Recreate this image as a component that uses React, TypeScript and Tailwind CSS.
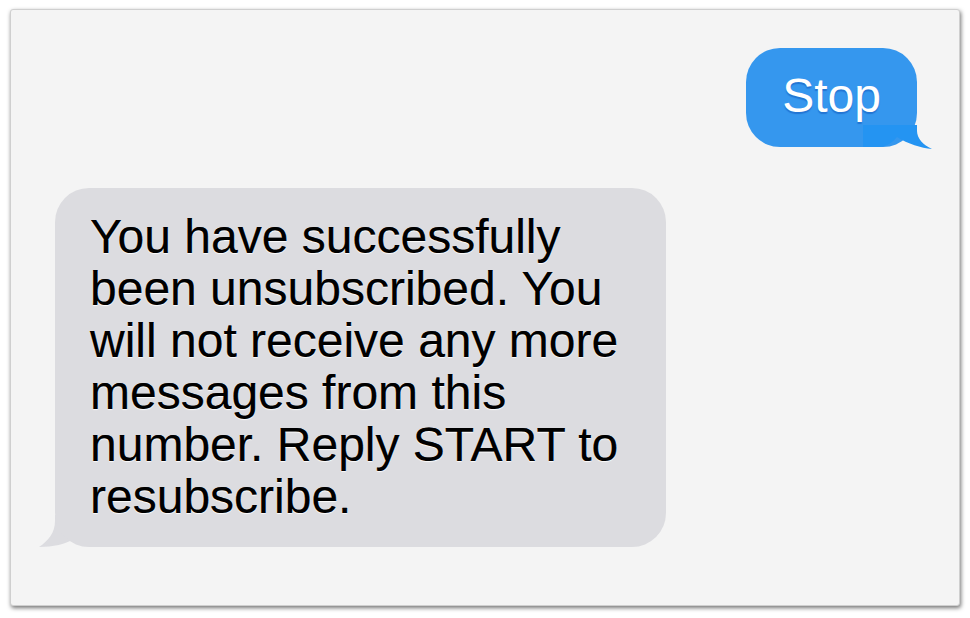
import React from 'react';

const font = { fontFamily: '"Liberation Sans", Arial, Helvetica, sans-serif' };

function SentBubble({ text }: { text: string }) {
  return (
    <div className="relative self-end mr-[42px] mt-[38px]">
      <div className="relative rounded-[34px] bg-[#3597ee] pl-[36px] pr-[36px] pt-[22px] pb-[25px] text-[48px] leading-[52px] text-white [text-shadow:0_2px_1px_rgba(20,90,190,0.55)]">
        {text}
      </div>
      <svg
        className="absolute right-[-16px] bottom-[-3px]"
        width="70"
        height="25"
        viewBox="0 0 70 25"
      >
        <path
          d="M0,0 H54 V6 C54,13 60,20 69,24 C58,23 45,19 34,12 C30,17 24,22 14,22 H0 Z"
          fill="#2494f2"
        />
      </svg>
    </div>
  );
}

function ReceivedBubble({ text }: { text: string }) {
  return (
    <div className="relative self-start ml-[44px] mt-[41px]">
      <svg
        className="absolute left-[-17px] bottom-[-1px]"
        width="60"
        height="33"
        viewBox="0 0 60 33"
      >
        <path
          d="M17,0 H58 V31 C50,31 42,29 36,24 C28,29 15,32 1,32 C10,26 17,18 17,6 Z"
          fill="#dcdce0"
        />
      </svg>
      <div className="relative w-[611px] rounded-[34px] bg-[#dcdce0] pl-[35px] pr-[30px] pt-[23px] pb-[24px] text-[48px] leading-[52px] text-black [text-shadow:0_1px_1px_rgba(255,255,255,0.9),0_0_0.4px_rgba(0,0,0,0.8)]">
        {text}
      </div>
    </div>
  );
}

export default function App() {
  return (
    <div className="w-[970px] h-[618px] bg-white pl-[10px] pt-[9px]" style={font}>
      <div className="flex h-[597px] w-[950px] flex-col rounded-[3px] border border-[#cfcfcf] bg-[#f4f4f4] shadow-[1px_2px_4px_rgba(0,0,0,0.55)]">
        <SentBubble text="Stop" />
        <ReceivedBubble text="You have successfully been unsubscribed. You will not receive any more messages from this number. Reply START to resubscribe." />
      </div>
    </div>
  );
}
